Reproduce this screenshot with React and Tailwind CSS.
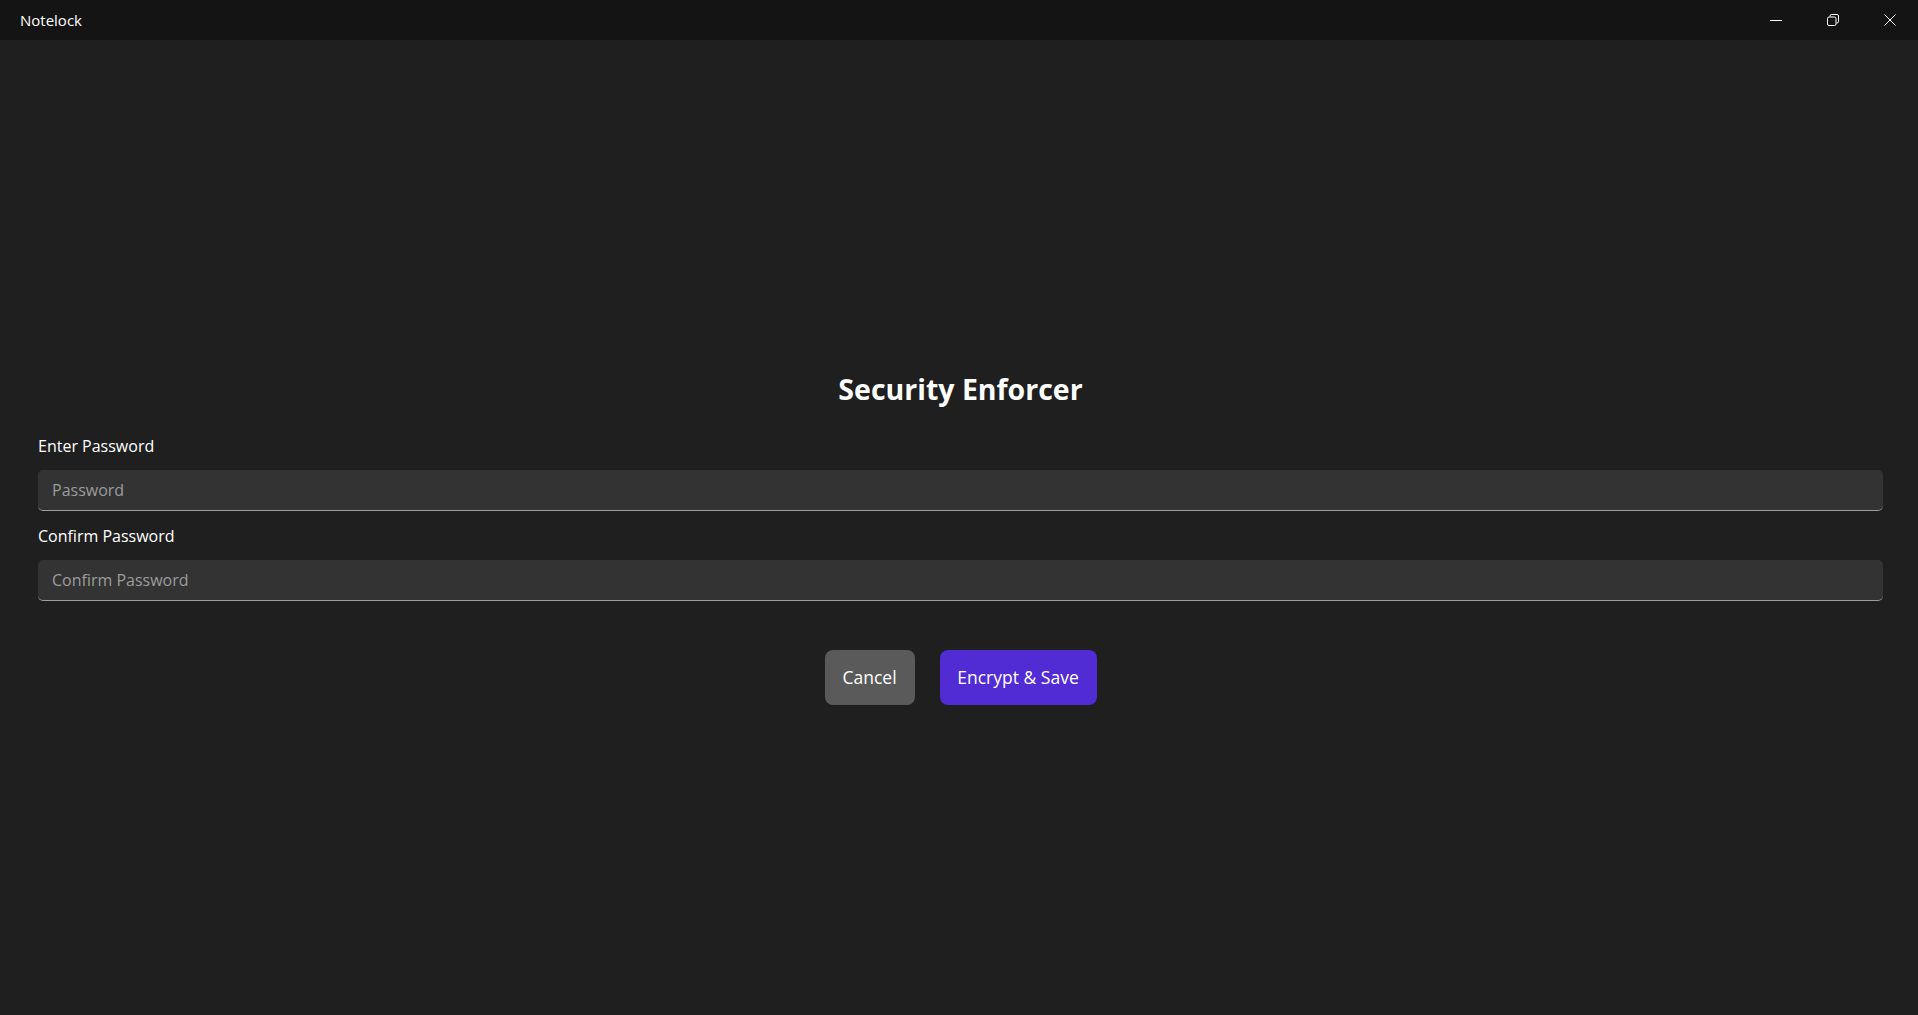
import React, { useState } from 'react';

// caption buttons drawn as thin strokes, like the native window chrome
const MinimizeIcon = () => (
  <svg width="12" height="12" viewBox="0 0 12 12" fill="none" stroke="#ffffff" strokeWidth="1">
    <path d="M0 6.5h12" />
  </svg>
);

const RestoreIcon = () => (
  <svg width="12" height="12" viewBox="0 0 12 12" fill="none" stroke="#ffffff" strokeWidth="1">
    <rect x="0.5" y="3" width="8.5" height="8.5" rx="1.5" />
    <path d="M3 2.5V2a1.5 1.5 0 0 1 1.5-1.5H10A1.5 1.5 0 0 1 11.5 2v5.5A1.5 1.5 0 0 1 10 9h-0.5" />
  </svg>
);

const CloseIcon = () => (
  <svg width="12" height="12" viewBox="0 0 12 12" fill="none" stroke="#ffffff" strokeWidth="1">
    <path d="M0.5 0.5l11 11M11.5 0.5l-11 11" />
  </svg>
);

const TitleBar = () => (
  <div className="h-10 shrink-0 flex items-center justify-between bg-[#141414]">
    <span className="pl-5 text-[15px] text-white">Notelock</span>
    <div className="flex h-full">
      <button className="w-[57px] h-full flex items-center justify-center hover:bg-white/10">
        <MinimizeIcon />
      </button>
      <button className="w-[57px] h-full flex items-center justify-center hover:bg-white/10">
        <RestoreIcon />
      </button>
      <button className="w-[57px] h-full flex items-center justify-center hover:bg-red-600">
        <CloseIcon />
      </button>
    </div>
  </div>
);

const PasswordField = ({ label, placeholder, value, onChange }) => (
  <div className="flex flex-col">
    <label className="text-[16px] leading-6 text-white mb-3">{label}</label>
    <input
      type="password"
      placeholder={placeholder}
      value={value}
      onChange={(e) => onChange(e.target.value)}
      className="h-[41px] w-full rounded-[5px] bg-[#333333] border-b border-[#9e9e9e] px-[14px] text-[16px] text-white placeholder:text-[#9c9c9c] outline-none"
    />
  </div>
);

const App = () => {
  const [password, setPassword] = useState('');
  const [confirm, setConfirm] = useState('');

  return (
    <div
      className="h-[1015px] w-full flex flex-col bg-[#1f1f1f] overflow-hidden"
      style={{ fontFamily: '"Open Sans", "Noto Sans", sans-serif' }}
    >
      <TitleBar />

      <main className="flex-1 flex flex-col pl-[38px] pr-[35px] pt-[329px]">
        <h1 className="text-center text-[28.5px] leading-10 font-bold text-white mb-[25px]">
          Security Enforcer
        </h1>

        <div className="flex flex-col gap-[13px]">
          <PasswordField
            label="Enter Password"
            placeholder="Password"
            value={password}
            onChange={setPassword}
          />
          <PasswordField
            label="Confirm Password"
            placeholder="Confirm Password"
            value={confirm}
            onChange={setConfirm}
          />
        </div>

        <div className="flex justify-center gap-[25px] mt-[49px]">
          <button className="h-[55px] w-[90px] rounded-lg bg-[#5a5a5a] text-[17.5px] text-white">
            Cancel
          </button>
          <button className="h-[55px] w-[157px] rounded-lg bg-[#512bd4] text-[17.5px] text-white">
            Encrypt &amp; Save
          </button>
        </div>
      </main>
    </div>
  );
};

export default App;
